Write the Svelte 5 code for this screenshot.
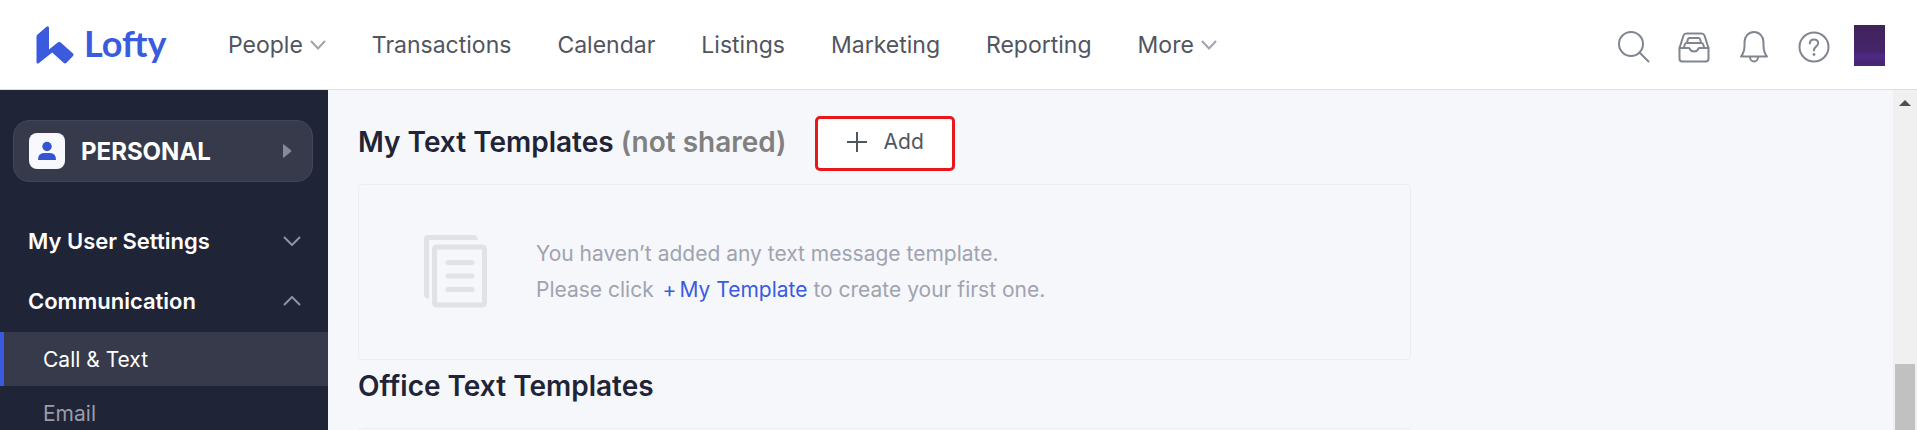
<script>
  let active = 'Call & Text';

  const navItems = [
    { label: 'People', menu: true },
    { label: 'Transactions' },
    { label: 'Calendar' },
    { label: 'Listings' },
    { label: 'Marketing' },
    { label: 'Reporting' },
    { label: 'More', menu: true }
  ];

  let sections = [
    { title: 'My User Settings', open: false, items: [] },
    { title: 'Communication', open: true, items: ['Call & Text', 'Email'] }
  ];

  function toggle(index) {
    sections[index].open = !sections[index].open;
  }
</script>

<div class="page">
  <header>
    <a class="logo" href="#home">
      <svg width="38" height="38" viewBox="0 0 38 38" aria-hidden="true">
        <path d="M.5 10.500Q.5 9.500 1.300 8.800L10.800 .6Q12.800 -.4 13 1.800V23.500L22 16.300Q23.200 15.500 24.400 16.300L37 27.500Q38 28.700 37 29.900L30.500 36.700Q29 38 27.500 36.800L16.200 26.500L3 37Q.5 38.500 .5 36Z" />
      </svg>
      <span>Lofty</span>
    </a>
    <nav>
      {#each navItems as item}
        <a href="#{item.label.toLowerCase()}">
          {item.label}
          {#if item.menu}
            <svg class="caret" width="16" height="10" viewBox="0 0 16 10" aria-hidden="true">
              <path d="M1 1L8 8.500L15 1" />
            </svg>
          {/if}
        </a>
      {/each}
    </nav>
    <div class="tools">
      <button aria-label="Search">
        <svg width="32" height="32" viewBox="0 0 32 32">
          <circle cx="13" cy="13" r="12" />
          <path d="M21.500 21.500L30.500 30.500" />
        </svg>
      </button>
      <button aria-label="Inbox">
        <svg width="32" height="32" viewBox="0 0 32 32">
          <path d="M1.500 17L5.500 4.500Q6.200 2.500 8.500 2.500H23.500Q25.800 2.500 26.500 4.500L30.500 17" />
          <path d="M1.500 17H10.500Q12 17 12 18.500Q13 20.500 16 20.500T20 18.500Q20 17 21.500 17H30.500V27.500Q30.500 30.500 28 30.500H4Q1.500 30.500 1.500 27.500Z" />
          <path d="M6 16L7 13Q7.300 12 8.300 12H23.700Q24.700 12 25 13L26 16M9 11.500L10 8Q10.300 7 11.300 7H20.700Q21.700 7 22 8L23 11.500" />
        </svg>
      </button>
      <button aria-label="Notifications">
        <svg width="32" height="32" viewBox="0 0 32 32">
          <path d="M3 25.500Q6.500 21 6.500 15V11A9.500 10 0 0 1 25.500 11V15Q25.500 21 29 25.500Z" />
          <path d="M12 26A4 4.500 0 0 0 20 26" />
        </svg>
      </button>
      <button aria-label="Help">
        <svg width="32" height="32" viewBox="0 0 32 32">
          <circle cx="16" cy="16" r="14.500" />
          <path d="M11.800 12.500Q12 8.500 16 8.500T20.200 12.200Q20.200 14 18 15.600T16 19.500" />
          <circle class="dot" cx="16" cy="23.500" r="1.400" />
        </svg>
      </button>
      <button class="avatar" aria-label="Account"></button>
    </div>
  </header>

  <div class="body">
    <aside>
      <button class="profile">
        <span class="badge">
          <svg width="20" height="20" viewBox="0 0 20 20" aria-hidden="true">
            <circle cx="10" cy="5.500" r="4.700" />
            <path d="M1 19Q1 12 7 12H13Q19 12 19 19Z" />
          </svg>
        </span>
        PERSONAL
        <svg class="arrow" width="10" height="14" viewBox="0 0 10 14" aria-hidden="true">
          <path d="M1 1Q1 0 2 .5L9 6.300Q9.800 7 9 7.700L2 13.500Q1 14 1 13Z" />
        </svg>
      </button>

      {#each sections as section, i}
        <button class="section" aria-expanded={section.open} on:click={() => toggle(i)}>
          {section.title}
          <svg class:up={section.open} width="18" height="10" viewBox="0 0 18 10" aria-hidden="true">
            <path d="M1 1L9 9L17 1" />
          </svg>
        </button>
        {#if section.open}
          {#each section.items as item}
            <a class="item" class:active={active === item} href="#settings" on:click={() => (active = item)}>
              {item}
            </a>
          {/each}
        {/if}
      {/each}
    </aside>

    <main>
      <div class="title-row">
        <h2>My Text Templates <span>(not shared)</span></h2>
        <button class="add">
          <svg width="22" height="22" viewBox="0 0 22 22" aria-hidden="true">
            <path d="M11 1V21M1 11H21" />
          </svg>
          Add
        </button>
      </div>
      <section class="card">
        <svg width="64" height="74" viewBox="0 0 64 74" aria-hidden="true">
          <path class="back" d="M0 4Q0 0 4 0H50Q53 0 54 5H5V64Q0 63 0 60Z" />
          <rect x="10.500" y="12" width="50" height="58" rx="2" />
          <path d="M24 27.500H48M24 41H48M24 54.500H48" />
        </svg>
        <p>
          You haven’t added any text message template.<br />
          Please click <a href="#new"><span>+</span>My Template</a> to create your first one.
        </p>
      </section>
      <h2 class="office">Office Text Templates</h2>
      <section class="card"></section>
    </main>

    <div class="scrollbar" aria-hidden="true">
      <svg width="12" height="6" viewBox="0 0 12 6"><path d="M0 6L6 0L12 6Z" /></svg>
      <div class="thumb"></div>
    </div>
  </div>
</div>

<style>
  :global(body) {
    font-family: Inter, 'Liberation Sans', sans-serif;
  }

  .page {
    display: flex;
    flex-direction: column;
    height: 100vh;
    overflow: hidden;
    font-size: 21px;
    color: #202436;
  }

  button {
    border: none;
    padding: 0;
    background: none;
    font: inherit;
    color: inherit;
    cursor: pointer;
  }

  a {
    text-decoration: none;
  }

  svg {
    display: block;
    flex: none;
    fill: none;
  }

  header {
    display: flex;
    align-items: center;
    flex: none;
    height: 89px;
    padding: 0 32px 0 36px;
    border-bottom: 1px solid #dedfe2;
    background: #fff;
  }

  .logo {
    display: flex;
    align-items: center;
    gap: 10px;
    width: 192px;
    font-family: Lato, sans-serif;
    font-size: 36px;
    font-weight: 700;
    line-height: 38px;
    color: #3b5bde;
  }

  .logo svg {
    fill: #3b5bde;
  }

  .logo span {
    padding-bottom: 4px;
  }

  nav {
    display: flex;
    flex: 1;
    gap: 46px;
    font-size: 23px;
  }

  nav a {
    display: flex;
    align-items: center;
    gap: 7px;
    color: #515560;
  }

  .caret {
    stroke: #a0a3ac;
    stroke-width: 2;
  }

  .tools {
    display: flex;
    align-items: center;
    gap: 28px;
    padding-top: 4px;
  }

  .tools svg {
    stroke: #80858f;
    stroke-width: 2;
    stroke-linecap: round;
    stroke-linejoin: round;
  }

  .tools .dot {
    fill: #80858f;
    stroke: none;
  }

  .avatar {
    width: 31px;
    height: 41px;
    margin: 0 0 2px -4px;
    background: linear-gradient(#3f235c, #45256a 65%, #50298a 75%, #472672 90%);
  }

  .body {
    display: flex;
    flex: 1;
    min-height: 0;
    background: #f5f7fb;
  }

  aside {
    flex: none;
    width: 328px;
    background: #202437;
    color: #fff;
  }

  .profile {
    display: flex;
    align-items: center;
    width: 300px;
    height: 62px;
    margin: 30px 13px;
    padding: 0 20px 0 15px;
    border: 1px solid #44475a;
    border-radius: 16px;
    background: #373a4a;
    font-size: 24px;
    font-weight: 700;
  }

  .badge {
    display: grid;
    place-items: center;
    width: 36px;
    height: 36px;
    margin-right: 16px;
    border-radius: 8px;
    background: #f8f9ff;
  }

  .badge svg {
    fill: #3454d1;
  }

  .arrow {
    margin-left: auto;
    fill: #878996;
  }

  .section {
    display: flex;
    align-items: center;
    justify-content: space-between;
    width: 100%;
    height: 60px;
    padding: 0 27px 2px 28px;
    font-size: 22px;
    font-weight: 600;
  }

  .section svg {
    stroke: #9193a0;
    stroke-width: 2;
  }

  .section .up {
    transform: rotate(180deg);
  }

  .item {
    display: flex;
    align-items: center;
    height: 54px;
    padding-left: 39px;
    border-left: 4px solid transparent;
    color: #9c9ba9;
  }

  .item.active {
    border-color: #3b5bde;
    background: #373a4a;
    color: #fff;
  }

  main {
    flex: 1;
    min-width: 0;
    padding: 26px 30px 0;
  }

  .title-row {
    display: flex;
    align-items: center;
    gap: 28px;
    margin-bottom: 13px;
  }

  h2 {
    margin: 0;
    font-size: 28px;
    font-weight: 600;
    line-height: 32px;
  }

  h2 span {
    color: #808080;
  }

  .title-row h2 {
    padding-bottom: 4px;
  }

  .add {
    display: flex;
    align-items: center;
    gap: 16px;
    box-sizing: border-box;
    height: 55px;
    padding: 0 28px 4px;
    border: 3px solid #e8181a;
    border-radius: 5px;
    background: #fff;
    color: #515560;
  }

  .add svg {
    stroke: #515560;
    stroke-width: 2;
  }

  .card {
    display: flex;
    align-items: center;
    gap: 48px;
    box-sizing: border-box;
    max-width: 1053px;
    height: 176px;
    padding: 0 65px;
    border: 1px solid #ebedf2;
    border-radius: 4px;
  }

  .card svg {
    stroke: #e0e2e6;
    stroke-width: 5;
    stroke-linecap: round;
  }

  .card .back {
    fill: #e0e2e6;
    stroke: none;
  }

  .card p {
    margin: 0;
    line-height: 36px;
    color: #a0a3af;
  }

  .card p a {
    margin-left: 3px;
    color: #3b5bde;
  }

  .card p span {
    margin-right: 3px;
  }

  .office {
    margin: 10px 0 26px;
  }

  .scrollbar {
    display: flex;
    flex-direction: column;
    align-items: center;
    justify-content: space-between;
    width: 24px;
    padding-top: 10px;
    background: #f0f0f0;
  }

  .scrollbar svg {
    fill: #505050;
  }

  .thumb {
    width: 20px;
    height: 20%;
    background: #c1c1c1;
  }
</style>
